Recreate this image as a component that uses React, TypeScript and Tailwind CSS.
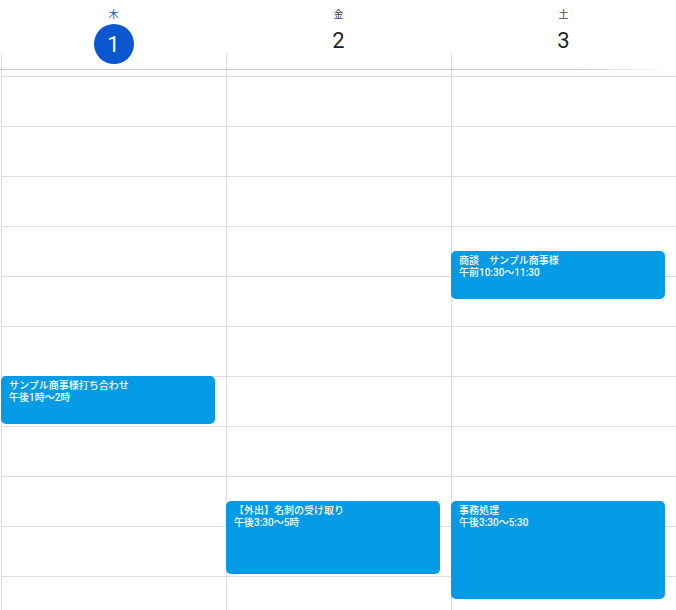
import React from "react";

type CalEvent = {
  title: string;
  time: string;
  start: number; // hour, e.g. 13.5
  end: number;
};

const days: { label: string; date: number; today?: boolean; events: CalEvent[] }[] = [
  {
    label: "木",
    date: 1,
    today: true,
    events: [{ title: "サンプル商事様打ち合わせ", time: "午後1時～2時", start: 13, end: 14 }],
  },
  {
    label: "金",
    date: 2,
    events: [{ title: "【外出】名刺の受け取り", time: "午後3:30～5時", start: 15.5, end: 17 }],
  },
  {
    label: "土",
    date: 3,
    events: [
      { title: "商談　サンプル商事様", time: "午前10:30～11:30", start: 10.5, end: 11.5 },
      { title: "事務処理", time: "午後3:30～5:30", start: 15.5, end: 17.5 },
    ],
  },
];

const HOUR = 50;
const FIRST_HOUR = 7;
const TOP_GAP = 6;
const hours = Array.from({ length: 11 }, (_, i) => i);

function EventChip({ ev }: { ev: CalEvent }) {
  const top = TOP_GAP + (ev.start - FIRST_HOUR) * HOUR;
  const height = (ev.end - ev.start) * HOUR - 2;
  return (
    <div
      className="absolute left-[-1px] w-[214px] rounded-[5px] bg-[#039be5] px-[8px] pt-[4px] text-[10px] leading-[12px] font-medium text-white overflow-hidden"
      style={{ top, height }}
    >
      <div className="truncate">{ev.title}</div>
      <div className="truncate">{ev.time}</div>
    </div>
  );
}

export default function App() {
  return (
    <div
      className="w-[676px] h-[610px] overflow-hidden bg-white pl-px"
      style={{ fontFamily: 'Roboto, "Noto Sans CJK JP", sans-serif' }}
    >
      {/* header */}
      <div className="grid grid-cols-[225px_225px_225px]">
        {days.map((d) => (
          <div key={d.date} className="flex flex-col">
            <div className="h-[53px] flex flex-col items-center">
              <div
                className={`mt-[8px] h-[14px] leading-[14px] text-[10px] ${
                  d.today ? "text-[#0b57d0]" : "text-[#3c4043]"
                }`}
              >
                {d.label}
              </div>
              {d.today ? (
                <div className="mt-[2px] w-[40px] h-[40px] shrink-0 rounded-full bg-[#0b57d0] text-white text-[22px] flex items-center justify-center">
                  {d.date}
                </div>
              ) : (
                <div className="mt-[2px] h-[40px] text-[#1f1f1f] text-[22px] flex items-center justify-center">
                  {d.date}
                </div>
              )}
            </div>
            <div className="h-[16px] border-l border-[#dadce0]" />
          </div>
        ))}
      </div>
      <div className="-ml-px h-px w-[670px] bg-gradient-to-r from-[#c4c7c5] via-[#c4c7c5] via-85% to-transparent" />

      {/* body */}
      <div className="grid grid-cols-[225px_225px_225px]">
        {days.map((d) => (
          <div key={d.date} className="relative border-l border-[#dadce0] h-[560px]">
            <div style={{ height: TOP_GAP }} />
            {hours.map((h) => (
              <div key={h} className="h-[50px] border-t border-[#dadce0]" />
            ))}
            {d.events.map((ev) => (
              <EventChip key={ev.title} ev={ev} />
            ))}
          </div>
        ))}
      </div>
    </div>
  );
}
